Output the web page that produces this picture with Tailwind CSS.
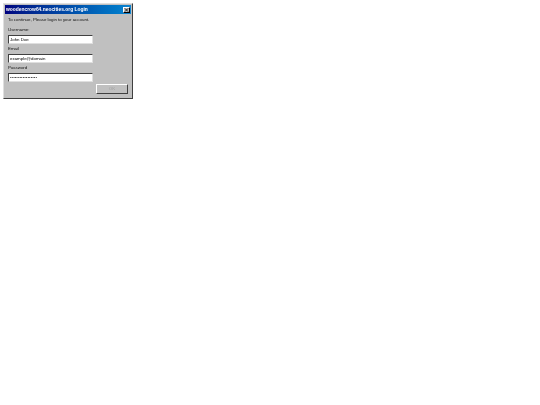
<!DOCTYPE html>
<html><head><meta charset="utf-8"><script src="https://cdn.jsdelivr.net/npm/@tailwindcss/browser@4"></script></head>
<body class="bg-white w-[540px] h-[405px] overflow-hidden font-['Liberation_Sans',sans-serif]">
<div class="ml-[3px] mt-[3px] w-[130px] h-[96px] bg-[#c0c0c0] p-[1px] flex flex-col border border-t-[#dfdfdf] border-l-[#dfdfdf] border-r-[#404040] border-b-[#404040] blur-[0.25px]">
  <div class="h-[9px] shrink-0 flex items-center justify-between pl-[1px] pr-[1px] bg-gradient-to-r from-[#000080] to-[#1084d0]">
    <span class="text-[4.9px] leading-[9px] font-bold text-white whitespace-nowrap">woodencrow64.neocities.org Login</span>
    <span class="w-[7px] h-[6px] bg-[#c0c0c0] border-[0.5px] border-t-white border-l-white border-r-black border-b-black flex items-center justify-center">
      <svg viewBox="0 0 6 5" class="w-[5px] h-[4px]"><path d="M1 .5 5 4.500M5 .5 1 4.500" stroke="#000" stroke-width="1"/></svg>
    </span>
  </div>
  <div class="flex flex-col pl-[3px] pr-[3px] text-[4.4px] leading-[6px] text-[#111]">
    <p class="mt-[3px] whitespace-nowrap">To continue, Please login to your account.</p>
    <label class="mt-[4px]">Username:</label>
    <div class="mt-[2px] w-[85px] h-[9px] bg-white border-[0.5px] border-t-[#404040] border-l-[#404040] border-r-[#dfdfdf] border-b-[#dfdfdf] pl-[1px] leading-[8px] text-black">John Doe</div>
    <label class="mt-[2px]">Email</label>
    <div class="mt-[2px] w-[85px] h-[9px] bg-white border-[0.5px] border-t-[#404040] border-l-[#404040] border-r-[#dfdfdf] border-b-[#dfdfdf] pl-[1px] leading-[8px] text-black">example@domain</div>
    <label class="mt-[2px]">Password</label>
    <div class="mt-[2px] w-[85px] h-[9px] bg-white border-[0.5px] border-t-[#404040] border-l-[#404040] border-r-[#dfdfdf] border-b-[#dfdfdf] pl-[1px] leading-[8px] text-black tracking-[0.05px] overflow-hidden">•••••••••••••••••</div>
    <div class="flex justify-end mt-[2px]">
      <button class="w-[32px] h-[10px] bg-[#c0c0c0] border border-t-white border-l-white border-r-[#404040] border-b-[#404040] text-[4.4px] leading-[8px] text-[#a0a0a0] text-center">OK</button>
    </div>
  </div>
</div>
</body></html>
